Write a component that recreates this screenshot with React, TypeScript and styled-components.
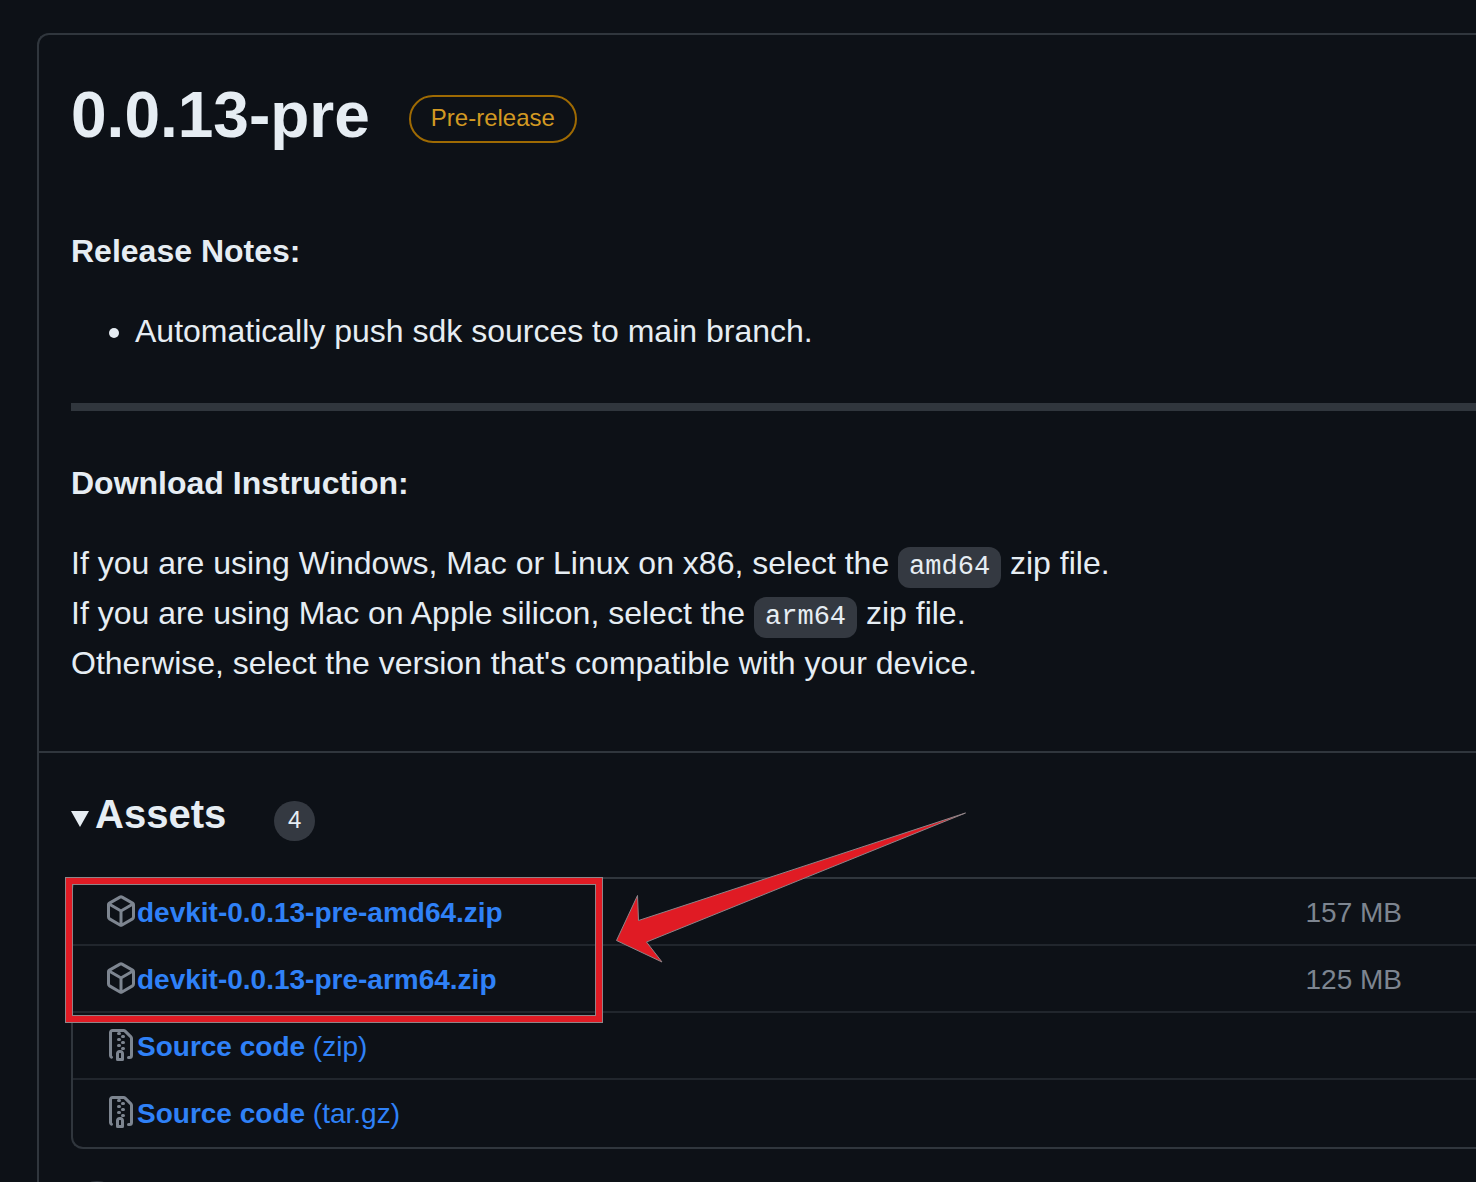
import React from "react";
import styled, { createGlobalStyle } from "styled-components";

const c = {
  canvas: "#0d1117",
  border: "#30363d",
  borderMuted: "#21262d",
  text: "#e6edf3",
  muted: "#7d8590",
  link: "#2f81f7",
  neutral: "#343941",
  attention: "#d29922",
  attentionBorder: "#9e6a03",
  mark: "#e01b24",
  markEdge: "#8f8488",
};

const GlobalStyle = createGlobalStyle`
  *, *::before, *::after { box-sizing: border-box; }
  body {
    margin: 0;
    background: ${c.canvas};
    color: ${c.text};
    font-family: "Liberation Sans", Arial, sans-serif;
    font-size: 32px;
    line-height: 48px;
  }
`;

const Page = styled.main`
  padding: 33px 0 32px 37px;
  overflow-x: hidden;
`;

const Card = styled.article`
  border: 2px solid ${c.border};
  border-right: 0;
  border-radius: 12px 0 0 12px;
`;

const Body = styled.section`
  padding: 32px 0 64px 32px;
`;

const TitleRow = styled.header`
  display: flex;
  align-items: center;
  gap: 39px;
  margin-bottom: 64px;
`;

const Title = styled.h1`
  margin: 0;
  font-size: 64px;
  line-height: 96px;
  font-weight: 700;
`;

const Label = styled.span`
  margin-top: 8px;
  padding: 0 20px 2px;
  border: 2px solid ${c.attentionBorder};
  border-radius: 24px;
  color: ${c.attention};
  font-size: 24px;
  line-height: 42px;
`;

const Paragraph = styled.p`
  margin: 0;

  & + & {
    margin-top: 32px;
  }
`;

const NoteList = styled.ul`
  margin: 32px 0 48px;
  padding-left: 64px;
`;

const Divider = styled.hr`
  height: 8px;
  margin: 0 0 48px;
  border: 0;
  background: ${c.border};
`;

const Code = styled.code`
  padding: 5px 11px 6px;
  border-radius: 12px;
  background: ${c.neutral};
  font-family: "Liberation Mono", monospace;
  font-size: 27px;
  line-height: 44px;
`;

const Footer = styled.section`
  border-top: 2px solid ${c.border};
  padding: 32px 0 32px 32px;
`;

const Summary = styled.summary`
  display: flex;
  align-items: center;
  height: 60px;
  margin-bottom: 32px;
  list-style: none;
  cursor: pointer;

  &::-webkit-details-marker {
    display: none;
  }
`;

const Marker = styled.svg`
  width: 18px;
  height: 16px;
  margin: 8px 6px 0 0;
  fill: ${c.text};
`;

const Heading = styled.h2`
  margin: 0;
  padding-bottom: 2px;
  font-size: 40px;
  line-height: 60px;
  font-weight: 700;
`;

const Counter = styled.span`
  min-width: 41px;
  margin: 12px 0 0 48px;
  padding: 0 12px 2px;
  border-radius: 20px;
  background: ${c.neutral};
  font-size: 24px;
  line-height: 38px;
  text-align: center;
`;

const AssetArea = styled.div`
  position: relative;
`;

const AssetList = styled.ul`
  margin: 0;
  padding: 0;
  list-style: none;
  border: 2px solid ${c.border};
  border-right: 0;
  border-radius: 12px 0 0 12px;
`;

const AssetRow = styled.li`
  display: flex;
  align-items: flex-start;
  padding: 13px 74px 11px 32px;
  border-bottom: 2px solid ${c.borderMuted};
  font-size: 28px;
  line-height: 41px;

  &:last-child {
    border-bottom-color: transparent;
  }
`;

const Icon = styled.svg`
  flex: none;
  width: 32px;
  height: 32px;
  fill: ${c.muted};
`;

const AssetIcon = styled(Icon)`
  margin-top: 3px;
`;

const AssetLink = styled.a`
  color: ${c.link};
  text-decoration: none;
`;

const Size = styled.span`
  margin-left: auto;
  color: ${c.muted};
`;

const Highlight = styled.div`
  position: absolute;
  top: 1px;
  left: -5px;
  width: 536px;
  height: 144px;
  border: 6px solid ${c.mark};
  box-shadow: 0 0 0 1px ${c.markEdge}, inset 0 0 0 1px ${c.markEdge};
  pointer-events: none;
`;

const Arrow = styled.svg`
  position: absolute;
  top: -66px;
  left: 543px;
  width: 354px;
  height: 154px;
  fill: ${c.mark};
  stroke: ${c.markEdge};
  pointer-events: none;
`;

const ReactionButton = styled.button`
  display: flex;
  align-items: center;
  justify-content: center;
  width: 52px;
  height: 52px;
  margin-top: 32px;
  padding: 0;
  border: 2px solid ${c.border};
  border-radius: 50%;
  background: ${c.borderMuted};
`;

const packagePath =
  "m8.878.392 5.25 3.045c.54.314.872.89.872 1.514v6.098a1.75 1.75 0 0 1-.872 1.514l-5.25 3.045a1.75 1.75 0 0 1-1.756 0l-5.25-3.045A1.75 1.75 0 0 1 1 11.049V4.951c0-.624.332-1.201.872-1.514L7.122.392a1.75 1.75 0 0 1 1.756 0ZM7.875 1.69l-4.63 2.685L8 7.133l4.755-2.758-4.63-2.685a.248.248 0 0 0-.25 0ZM2.5 5.677v5.372c0 .09.047.171.125.216l4.625 2.683V8.432Zm6.25 8.271 4.625-2.683a.25.25 0 0 0 .125-.216V5.677L8.75 8.432Z";

const zipPath =
  "M3.5 1.75v11.5c0 .09.048.173.126.217a.75.75 0 0 1-.752 1.298A1.748 1.748 0 0 1 2 13.25V1.75C2 .784 2.784 0 3.75 0h5.586c.464 0 .909.185 1.237.513l2.914 2.914c.329.328.513.773.513 1.237v8.586A1.75 1.75 0 0 1 12.25 15h-.5a.75.75 0 0 1 0-1.5h.5a.25.25 0 0 0 .25-.25V4.664a.25.25 0 0 0-.073-.177L9.513 1.573a.25.25 0 0 0-.177-.073H7.25a.75.75 0 0 1 0 1.5h-.5a.75.75 0 0 1 0-1.5h-3a.25.25 0 0 0-.25.25Zm3.75 8.75h.5c.966 0 1.75.784 1.75 1.75v3a.75.75 0 0 1-.75.75h-2.5a.75.75 0 0 1-.75-.75v-3c0-.966.784-1.75 1.75-1.75ZM6 5.25a.75.75 0 0 1 .75-.75h.5a.75.75 0 0 1 0 1.5h-.5A.75.75 0 0 1 6 5.25Zm.75 2.25h.5a.75.75 0 0 1 0 1.5h-.5a.75.75 0 0 1 0-1.5ZM8 6.75A.75.75 0 0 1 8.75 6h.5a.75.75 0 0 1 0 1.5h-.5A.75.75 0 0 1 8 6.75ZM8.75 3h.5a.75.75 0 0 1 0 1.5h-.5a.75.75 0 0 1 0-1.5ZM8 9.75A.75.75 0 0 1 8.75 9h.5a.75.75 0 0 1 0 1.5h-.5A.75.75 0 0 1 8 9.75Zm-1 2.5v2.25h1v-2.25a.25.25 0 0 0-.25-.25h-.5a.25.25 0 0 0-.25.25Z";

type Asset = { name: string; suffix?: string; size?: string; icon: string };

const assets: Asset[] = [
  { name: "devkit-0.0.13-pre-amd64.zip", size: "157 MB", icon: packagePath },
  { name: "devkit-0.0.13-pre-arm64.zip", size: "125 MB", icon: packagePath },
  { name: "Source code", suffix: "(zip)", icon: zipPath },
  { name: "Source code", suffix: "(tar.gz)", icon: zipPath },
];

export default function App() {
  return (
    <>
      <GlobalStyle />
      <Page>
        <Card>
          <Body>
            <TitleRow>
              <Title>0.0.13-pre</Title>
              <Label>Pre-release</Label>
            </TitleRow>
            <Paragraph>
              <strong>Release Notes:</strong>
            </Paragraph>
            <NoteList>
              <li>Automatically push sdk sources to main branch.</li>
            </NoteList>
            <Divider />
            <Paragraph>
              <strong>Download Instruction:</strong>
            </Paragraph>
            <Paragraph>
              If you are using Windows, Mac or Linux on x86, select the <Code>amd64</Code> zip file.
              <br />
              If you are using Mac on Apple silicon, select the <Code>arm64</Code> zip file.
              <br />
              Otherwise, select the version that's compatible with your device.
            </Paragraph>
          </Body>
          <Footer>
            <details open>
              <Summary>
                <Marker viewBox="0 0 18 16" aria-hidden="true">
                  <path d="M0 0h18L9 16Z" />
                </Marker>
                <Heading>Assets</Heading>
                <Counter>{assets.length}</Counter>
              </Summary>
              <AssetArea>
                <AssetList>
                  {assets.map((asset) => (
                    <AssetRow key={asset.name + (asset.suffix ?? "")}>
                      <AssetIcon viewBox="0 0 16 16" aria-hidden="true">
                        <path d={asset.icon} />
                      </AssetIcon>
                      <AssetLink href="#">
                        <strong>{asset.name}</strong>
                        {asset.suffix && ` ${asset.suffix}`}
                      </AssetLink>
                      {asset.size && <Size>{asset.size}</Size>}
                    </AssetRow>
                  ))}
                </AssetList>
                <Highlight />
                <Arrow viewBox="0 0 354 154" aria-hidden="true">
                  <path d="M2.5 129.5 23.5 84.5 24.5 109.5 351.5 2 32.5 131 48 151Z" />
                </Arrow>
              </AssetArea>
            </details>
            <ReactionButton type="button" aria-label="Add reaction">
              <Icon viewBox="0 0 16 16" aria-hidden="true">
                <path d="M8 0a8 8 0 1 1 0 16A8 8 0 0 1 8 0ZM1.5 8a6.5 6.5 0 1 0 13 0 6.5 6.5 0 0 0-13 0ZM5 8a1 1 0 1 1 0-2 1 1 0 0 1 0 2Zm6 0a1 1 0 1 1 0-2 1 1 0 0 1 0 2ZM4.7 10h6.6a3.5 3.5 0 0 1-6.6 0Z" />
              </Icon>
            </ReactionButton>
          </Footer>
        </Card>
      </Page>
    </>
  );
}
